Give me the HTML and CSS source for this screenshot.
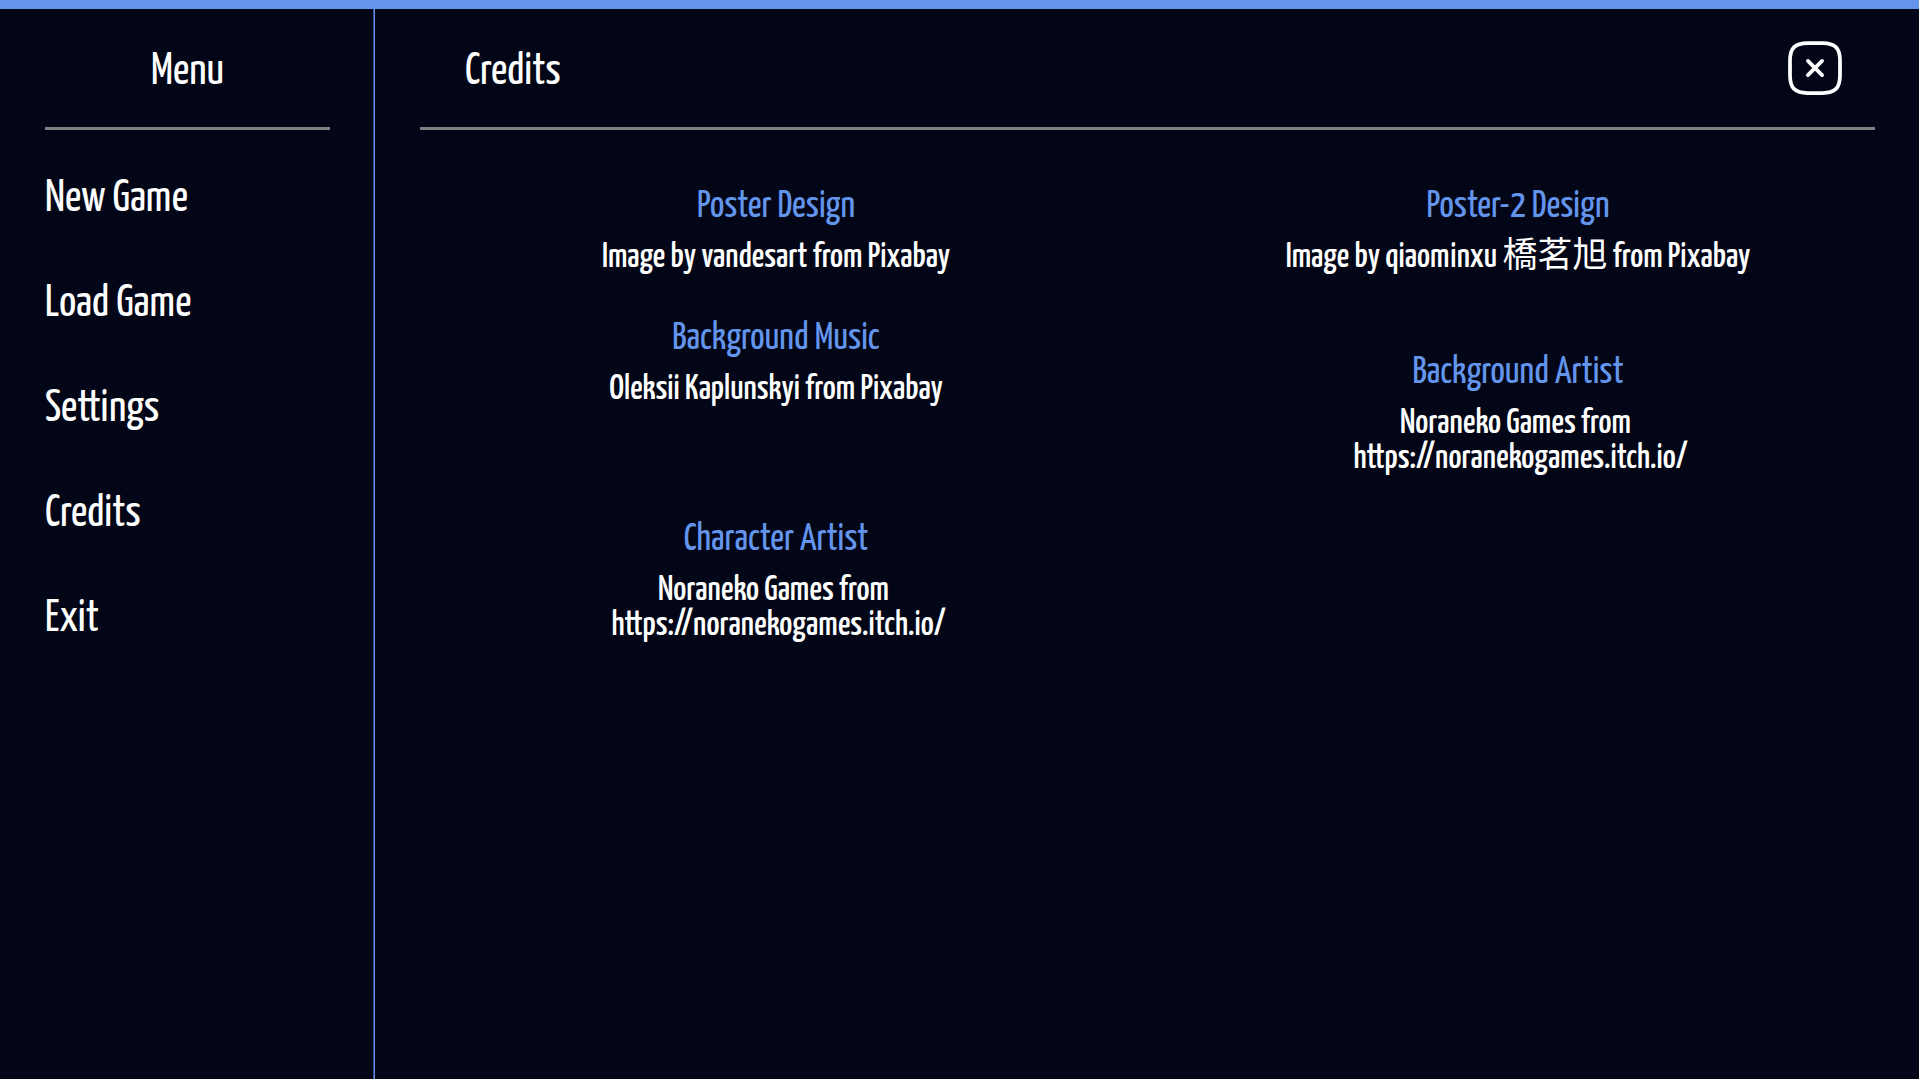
FILE: index.html
```html
<!DOCTYPE html>
<html lang="en">
<head>
  <meta charset="utf-8">
  <meta name="viewport" content="width=device-width, initial-scale=1">
  <title>Credits</title>
  <link rel="stylesheet" href="styles.css">
</head>
<body>
  <div class="app">
    <aside class="sidebar">
      <h1 class="sidebar-title">Menu</h1>
      <nav class="menu">
        <button type="button" class="menu-item">New Game</button>
        <button type="button" class="menu-item">Load Game</button>
        <button type="button" class="menu-item">Settings</button>
        <button type="button" class="menu-item">Credits</button>
        <button type="button" class="menu-item">Exit</button>
      </nav>
    </aside>
    <main class="panel">
      <header class="panel-header">
        <h2 class="panel-title">Credits</h2>
        <button type="button" class="close" aria-label="Close">
          <svg class="close-icon" viewBox="0 0 24 24" fill="none" stroke="currentColor" stroke-width="1.5" stroke-linecap="round" stroke-linejoin="round" aria-hidden="true">
            <path d="M9.17 14.83l5.66-5.66M14.83 14.83L9.17 9.17M9 22h6c5 0 7-2 7-7V9c0-5-2-7-7-7H9C4 2 2 4 2 9v6c0 5 2 7 7 7z"/>
          </svg>
        </button>
      </header>
      <div class="credits">
        <div class="credits-column">
          <section class="credit">
            <h3 class="credit-role">Poster Design</h3>
            <p class="credit-name">Image by vandesart from Pixabay</p>
          </section>
          <section class="credit">
            <h3 class="credit-role">Background Music</h3>
            <p class="credit-name">Oleksii Kaplunskyi from Pixabay</p>
          </section>
          <section class="credit credit-last">
            <h3 class="credit-role">Character Artist</h3>
            <p class="credit-name">Noraneko Games from&nbsp;<br>&nbsp;https://noranekogames.itch.io/</p>
          </section>
        </div>
        <div class="credits-column credits-column-wide">
          <section class="credit">
            <h3 class="credit-role">Poster-2 Design</h3>
            <p class="credit-name">Image by qiaominxu <span class="native-name" lang="zh">橋茗旭</span> from Pixabay</p>
          </section>
          <section class="credit">
            <h3 class="credit-role">Background Artist</h3>
            <p class="credit-name">Noraneko Games from&nbsp;<br>&nbsp;https://noranekogames.itch.io/</p>
          </section>
        </div>
      </div>
    </main>
  </div>
</body>
</html>
```
FILE: styles.css
```css
* {
  box-sizing: border-box;
}

body {
  margin: 0;
  background: #020617;
  color: #fff;
  font-family: "Yanone Kaffeesatz", "Noto Sans CJK SC", sans-serif;
  font-weight: 400;
}

h1, h2, h3, p {
  margin: 0;
  font-weight: 400;
}

button {
  padding: 0;
  border: 0;
  background: none;
  color: inherit;
  font: inherit;
  cursor: pointer;
}

.app {
  display: grid;
  grid-template-columns: 375px 1fr;
  min-height: 100vh;
  border-top: 9px solid #6495ed;
}

.sidebar {
  padding: 0 44px 0 45px;
  border-right: 1px solid #6495ed;
  box-shadow: inset -1px 0 rgba(100, 149, 237, 0.5);
}

.sidebar-title,
.panel-header {
  height: 121px;
  border-bottom: 3px solid #808080;
}

.sidebar-title,
.panel-title {
  padding-top: 8px;
  font-size: 45px;
  line-height: 110px;
}

.sidebar-title {
  text-align: center;
}

.menu {
  display: flex;
  flex-direction: column;
  align-items: flex-start;
  gap: 60px;
  padding-top: 47px;
}

.menu-item {
  font-size: 45px;
  line-height: 45px;
}

.panel-header {
  display: flex;
  align-items: center;
  justify-content: space-between;
  margin: 0 44px 0 45px;
  padding: 0 30px 0 45px;
}

.close {
  width: 60px;
  height: 60px;
}

.close-icon {
  display: block;
  width: 60px;
  height: 60px;
}

.credits {
  display: grid;
  grid-template-columns: 1fr 1fr;
  padding: 59px 30px;
  text-align: center;
}

.credits-column {
  display: flex;
  flex-direction: column;
  gap: 46px;
}

.credits-column-wide {
  gap: 80px;
}

.credit-last {
  margin-top: 69px;
}

.credit-role {
  margin-bottom: 15px;
  color: #6495ed;
  font-size: 38px;
  line-height: 36px;
}

.credit-name {
  font-size: 35px;
  font-weight: 500;
  line-height: 35px;
}

.native-name {
  font-weight: 400;
}
```
